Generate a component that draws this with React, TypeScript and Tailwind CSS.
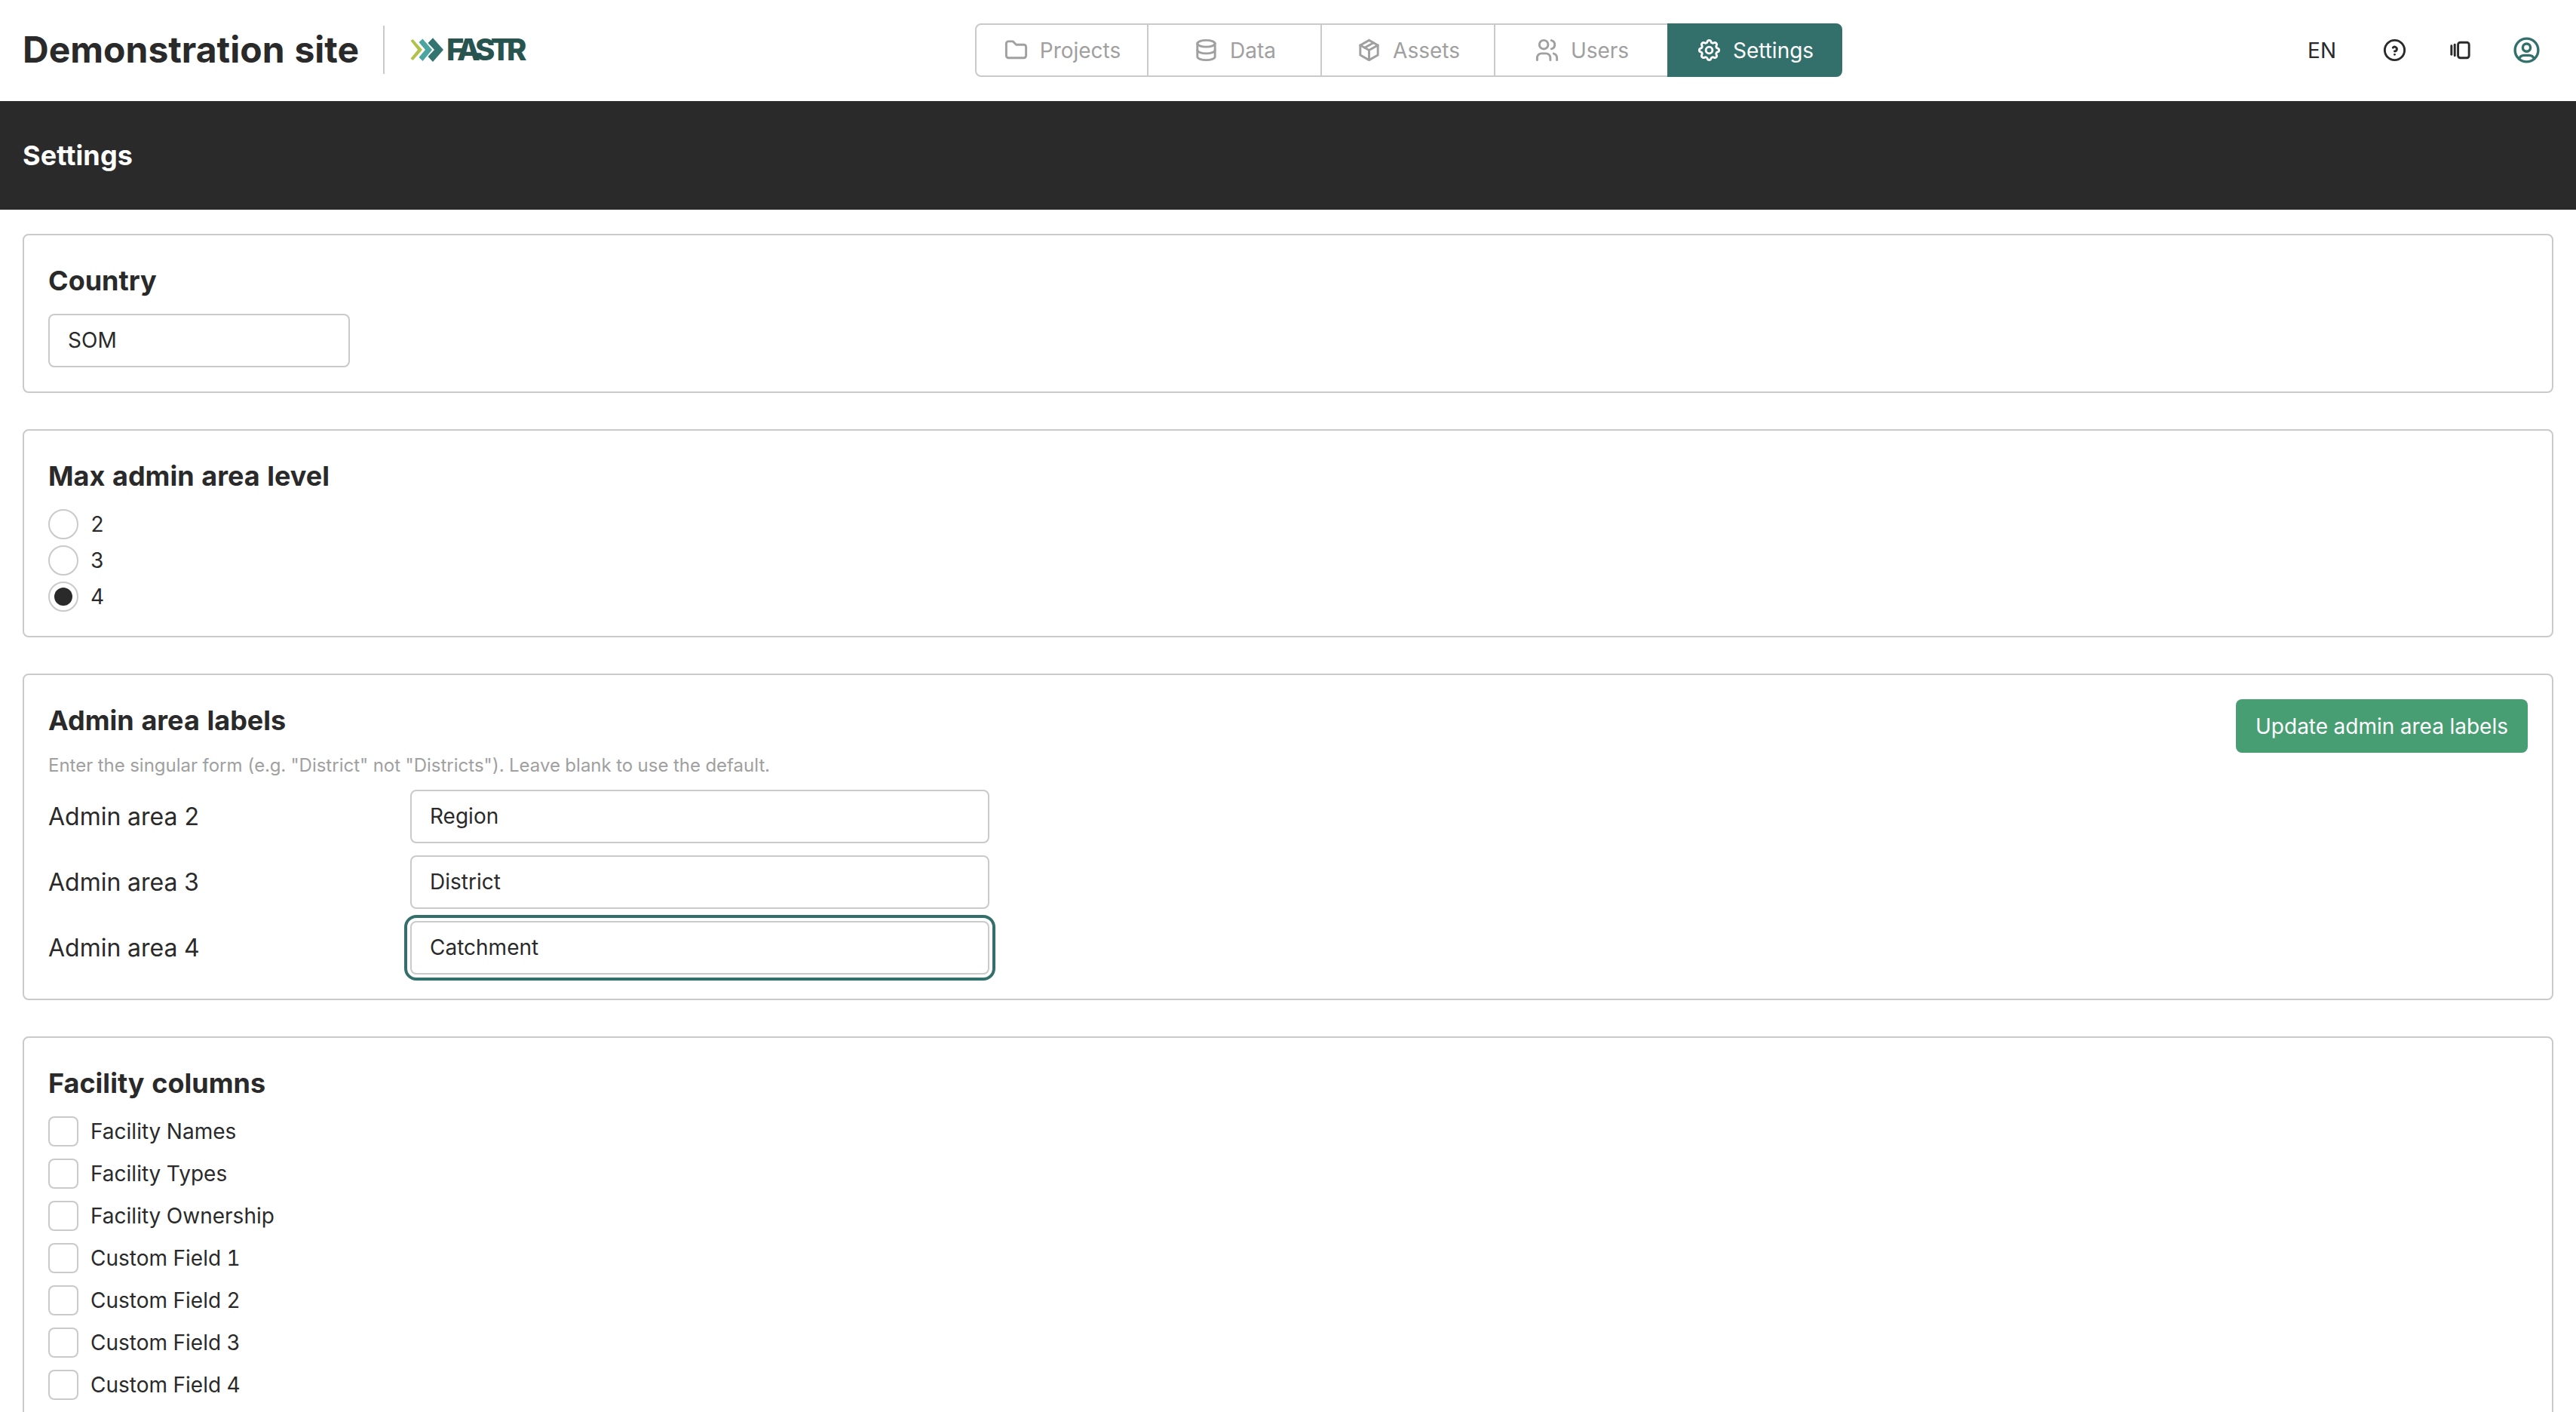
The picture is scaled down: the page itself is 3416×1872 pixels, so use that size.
import { useState } from 'react';
import type { ReactNode } from 'react';
import { clsx } from 'clsx';
import type { IconType } from 'react-icons';
import {
  TbDatabase,
  TbFolder,
  TbHelpCircle,
  TbPackage,
  TbSettings,
  TbUserCircle,
  TbUsers,
  TbVersions,
} from 'react-icons/tb';

const tabs: { label: string; icon: IconType }[] = [
  { label: 'Projects', icon: TbFolder },
  { label: 'Data', icon: TbDatabase },
  { label: 'Assets', icon: TbPackage },
  { label: 'Users', icon: TbUsers },
  { label: 'Settings', icon: TbSettings },
];

const adminLevels = [2, 3, 4];

const facilityColumns = [
  'Facility Names',
  'Facility Types',
  'Facility Ownership',
  'Custom Field 1',
  'Custom Field 2',
  'Custom Field 3',
  'Custom Field 4',
];

const Logo = () => (
  <div className="flex w-[164px] items-center">
    <svg width="45" height="36" viewBox="0 0 45 36">
      <path d="M0.5 6 3.5 4 16 18 3.5 32 0.5 29.5 10 18Z" fill="#b0c24a" />
      <path d="M11.5 8 16.5 3.5 29 18 16.5 33 11.5 28 20 18Z" fill="#4aa5a0" />
      <path d="M23.5 9 30 2.3 44 18 30 34 23.5 27 32 18Z" fill="#337370" />
    </svg>
    <span className="ml-[3px] text-[40px] leading-[48px] font-extrabold tracking-[-5.8px] text-[#27544f]">FASTR</span>
  </div>
);

const Header = () => {
  const [active, setActive] = useState('Settings');

  return (
    <header className="flex h-[134px] items-center justify-between pb-px pl-[30px] pr-[45px]">
      <div className="mb-px flex items-center">
        <h1 className="text-[48px] leading-[64px] font-bold">Demonstration site</h1>
        <div className="ml-8 mr-[34px] h-16 w-0.5 bg-[#cacaca]" />
        <Logo />
      </div>

      <nav className="mr-[32px] grid h-[71px] w-[1150px] grid-cols-5">
        {tabs.map(({ label, icon: Icon }, idx) => (
          <button
            key={label}
            className={clsx(
              'flex items-center justify-center gap-3.5 border-2',
              idx > 0 && '-ml-0.5',
              idx === 0 && 'rounded-l-lg',
              idx === tabs.length - 1 && 'rounded-r-lg',
              active === label ? 'border-[#33706c] bg-[#33706c] text-white' : 'border-[#cacaca] text-[#a0a0a0]',
            )}
            onClick={() => setActive(label)}
          >
            <Icon className="text-[35px]" />
            {label}
          </button>
        ))}
      </nav>

      <div className="flex items-center">
        <button className="mr-[60px]">EN</button>
        <TbHelpCircle className="mr-[52px] text-[35px]" />
        <TbVersions className="mr-[50px] text-[35px]" />
        <TbUserCircle className="text-[41px] text-[#33706c]" />
      </div>
    </header>
  );
};

const Card = ({ title, action, children }: { title: string; action?: ReactNode; children: ReactNode }) => (
  <section className="flex items-start justify-between rounded-lg border-2 border-[#cacaca] p-8">
    <div>
      <h3 className="mb-4 text-[36px] leading-[56px] font-bold">{title}</h3>
      {children}
    </div>
    {action}
  </section>
);

const TextInput = ({ value, className, focused }: { value: string; className: string; focused?: boolean }) => (
  <input
    defaultValue={value}
    className={clsx(
      'block h-[71px] rounded-lg border-2 border-[#cacaca] px-6 pb-0.5',
      focused ? 'outline-4 outline-offset-4 outline-[#33706c]' : 'outline-none',
      className,
    )}
  />
);

const App = () => {
  const [level, setLevel] = useState(4);
  const [checked, setChecked] = useState<string[]>([]);

  const toggle = (name: string) =>
    setChecked((prev) => (prev.includes(name) ? prev.filter((n) => n !== name) : [...prev, name]));

  return (
    <div className="h-screen overflow-hidden bg-white font-['Inter',sans-serif] text-[28px] leading-[40px] text-[#2a2a2a] tabular-nums">
      <Header />

      <div className="flex h-36 items-center bg-[#2a2a2a] px-[30px]">
        <h2 className="text-[36px] leading-[56px] font-bold tracking-[0.1px] text-white">Settings</h2>
      </div>

      <main className="flex flex-col gap-12 px-[30px] py-8">
        <Card title="Country">
          <TextInput value="SOM" className="w-[400px]" />
        </Card>

        <Card title="Max admin area level">
          <div className="flex flex-col gap-2">
            {adminLevels.map((n) => (
              <button key={n} className="flex items-center gap-4" onClick={() => setLevel(n)}>
                <span className="flex size-10 items-center justify-center rounded-full border-2 border-[#cacaca]">
                  {level === n && <span className="size-6 rounded-full bg-[#2a2a2a]" />}
                </span>
                {n}
              </button>
            ))}
          </div>
        </Card>

        <Card
          title="Admin area labels"
          action={<button className="h-[71px] w-[387px] rounded-lg bg-[#479e73] text-white">Update admin area labels</button>}
        >
          <p className="mb-4 text-[24px] leading-8 text-[#a0a0a0]">
            Enter the singular form (e.g. "District" not "Districts"). Leave blank to use the default.
          </p>
          <div className="grid grid-cols-[480px_768px] items-center gap-y-4 text-[32px]">
            <span>Admin area 2</span>
            <TextInput value="Region" className="w-full text-[28px]" />
            <span>Admin area 3</span>
            <TextInput value="District" className="w-full text-[28px]" />
            <span>Admin area 4</span>
            <TextInput value="Catchment" className="w-full text-[28px]" focused />
          </div>
        </Card>

        <Card title="Facility columns">
          <div className="flex flex-col gap-4">
            {facilityColumns.map((name) => (
              <button key={name} className="flex items-center gap-4" onClick={() => toggle(name)}>
                <span
                  className={clsx(
                    'size-10 rounded-lg border-2 border-[#cacaca]',
                    checked.includes(name) && 'bg-[#2a2a2a]',
                  )}
                />
                {name}
              </button>
            ))}
          </div>
        </Card>
      </main>
    </div>
  );
};

export default App;
